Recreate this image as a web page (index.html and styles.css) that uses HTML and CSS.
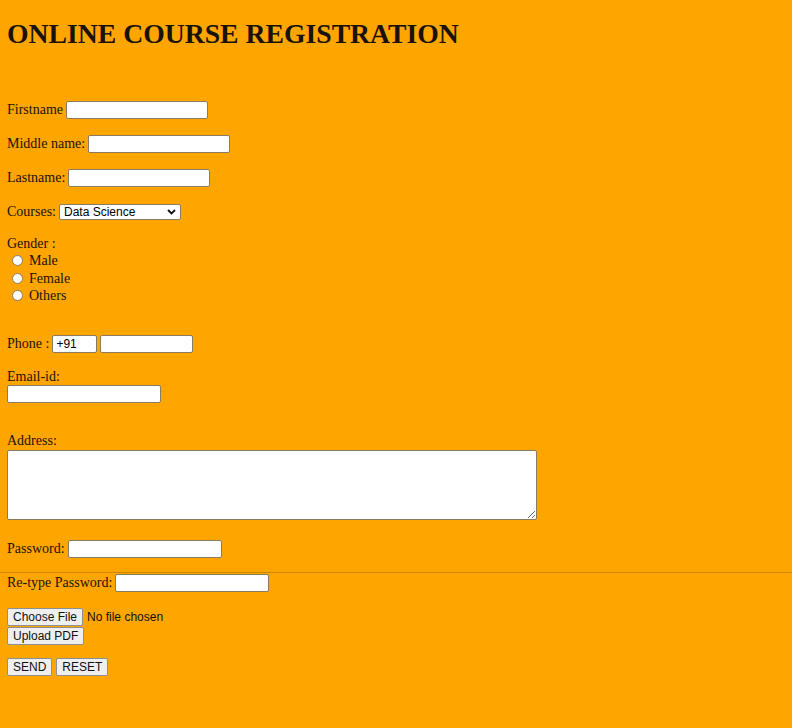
FILE: index.html
```html
<!DOCTYPE html>
<html>
<head>
<meta charset="utf-8">
<title>Online Course Registration</title>
<link rel="stylesheet" href="styles.css">
</head>
<body>
<h1 class="title">ONLINE COURSE REGISTRATION</h1>
<form class="form">
  <div class="row r-first"><span class="lbl">Firstname</span><input class="field" type="text"></div>
  <div class="row r-gap16"><span class="lbl">Middle name:</span><input class="field" type="text"></div>
  <div class="row r-gap16"><span class="lbl">Lastname:</span><input class="field" type="text"></div>
  <div class="row r-gap16"><span class="lbl">Courses:</span>
    <div class="select"><span>Data Science</span>
      <svg class="chev" width="9" height="6" viewBox="0 0 9 6"><path d="M1 1l3.5 3.5L8 1" fill="none" stroke="#111" stroke-width="1.8"/></svg>
    </div>
  </div>
  <div class="gender">
    <div class="line">Gender :</div>
    <label class="radio"><span class="dot"></span>Male</label>
    <label class="radio"><span class="dot"></span>Female</label>
    <label class="radio"><span class="dot"></span>Others</label>
  </div>
  <div class="row r-phone"><span class="lbl">Phone :</span><input class="field code" type="text" value="+91"><input class="field num" type="text"></div>
  <div class="stack r-email">
    <div class="line">Email-id:</div>
    <input class="field wide" type="text">
  </div>
  <div class="stack r-address">
    <div class="line">Address:</div>
    <textarea class="area"></textarea>
  </div>
  <div class="row r-pass"><span class="lbl">Password:</span><input class="field wide" type="password"></div>
  <div class="divider"></div>
  <div class="row r-retype"><span class="lbl">Re-type Password:</span><input class="field wide" type="password"></div>
  <div class="file r-file">
    <div class="frow"><button type="button" class="btn">Choose File</button><span class="nofile">No file chosen</span></div>
    <div class="frow"><button type="button" class="btn">Upload PDF</button></div>
  </div>
  <div class="frow r-send"><button type="button" class="btn">SEND</button><button type="button" class="btn">RESET</button></div>
</form>
</body>
</html>
```
FILE: styles.css
```css
html, body {
  background: #ffa500;
}
body {
  margin: 0;
  padding: 0 7px;
  font-family: "Liberation Serif", "Times New Roman", serif;
  font-size: 14px;
  color: #1a1206;
}
.title {
  margin: 0;
  padding-top: 18px;
  font-size: 27.7px;
  line-height: 32px;
  font-weight: bold;
}
.form {
  display: flex;
  flex-direction: column;
  align-items: flex-start;
}
.row {
  display: flex;
  align-items: center;
  height: 18px;
}
.lbl {
  margin-right: 3px;
  white-space: nowrap;
}
.r-first { margin-top: 51px; }
.r-gap16 { margin-top: 16px; }
.field {
  box-sizing: border-box;
  width: 142px;
  height: 18px;
  margin: 0;
  padding: 1px 3px;
  border: 1px solid #8a7a60;
  border-radius: 2px;
  background: #fff;
  font-family: "Liberation Sans", Arial, sans-serif;
  font-size: 12px;
  color: #000;
}
.field.wide { width: 154px; }
.field.code { width: 45px; }
.field.num { width: 93px; margin-left: 3px; }
.select {
  box-sizing: border-box;
  width: 122px;
  height: 16px;
  display: flex;
  align-items: center;
  justify-content: space-between;
  padding: 0 4px 0 4px;
  border: 1px solid #8a7a60;
  border-radius: 2px;
  background: #fff;
  font-family: "Liberation Sans", Arial, sans-serif;
  font-size: 12px;
  color: #000;
}
.chev { display: block; }
.gender {
  margin-top: 14px;
  display: flex;
  flex-direction: column;
}
.line {
  line-height: 17px;
}
.radio {
  display: flex;
  align-items: center;
  height: 17.5px;
  line-height: 17.5px;
}
.dot {
  box-sizing: border-box;
  width: 11px;
  height: 11px;
  margin: 0 6px 0 5px;
  border: 1px solid #8a7a60;
  border-radius: 50%;
  background: #fff;
}
.r-phone { margin-top: 30px; }
.stack {
  display: flex;
  flex-direction: column;
  align-items: flex-start;
}
.r-email { margin-top: 15px; }
.r-address { margin-top: 29px; }
.area {
  box-sizing: border-box;
  width: 530px;
  height: 70px;
  margin: 1px 0 0;
  border: 1px solid #8a7a60;
  border-radius: 2px;
  background: #fff;
}
.r-pass { margin-top: 20px; }
.divider {
  align-self: stretch;
  margin: 14px -7px 0;
  height: 1px;
  background: #d08a00;
}
.r-retype { margin-top: 1px; }
.file {
  margin-top: 16px;
  display: flex;
  flex-direction: column;
  gap: 1px;
}
.frow {
  display: flex;
  align-items: center;
  gap: 4px;
}
.btn {
  box-sizing: border-box;
  height: 18px;
  margin: 0;
  padding: 0 5px;
  border: 1px solid #8f8f8f;
  border-radius: 2px;
  background: #efefef;
  font-family: "Liberation Sans", Arial, sans-serif;
  font-size: 12px;
  line-height: 16px;
  color: #111;
}
.nofile {
  font-family: "Liberation Sans", Arial, sans-serif;
  font-size: 12px;
  color: #111;
}
.r-send { margin-top: 13px; }
```
